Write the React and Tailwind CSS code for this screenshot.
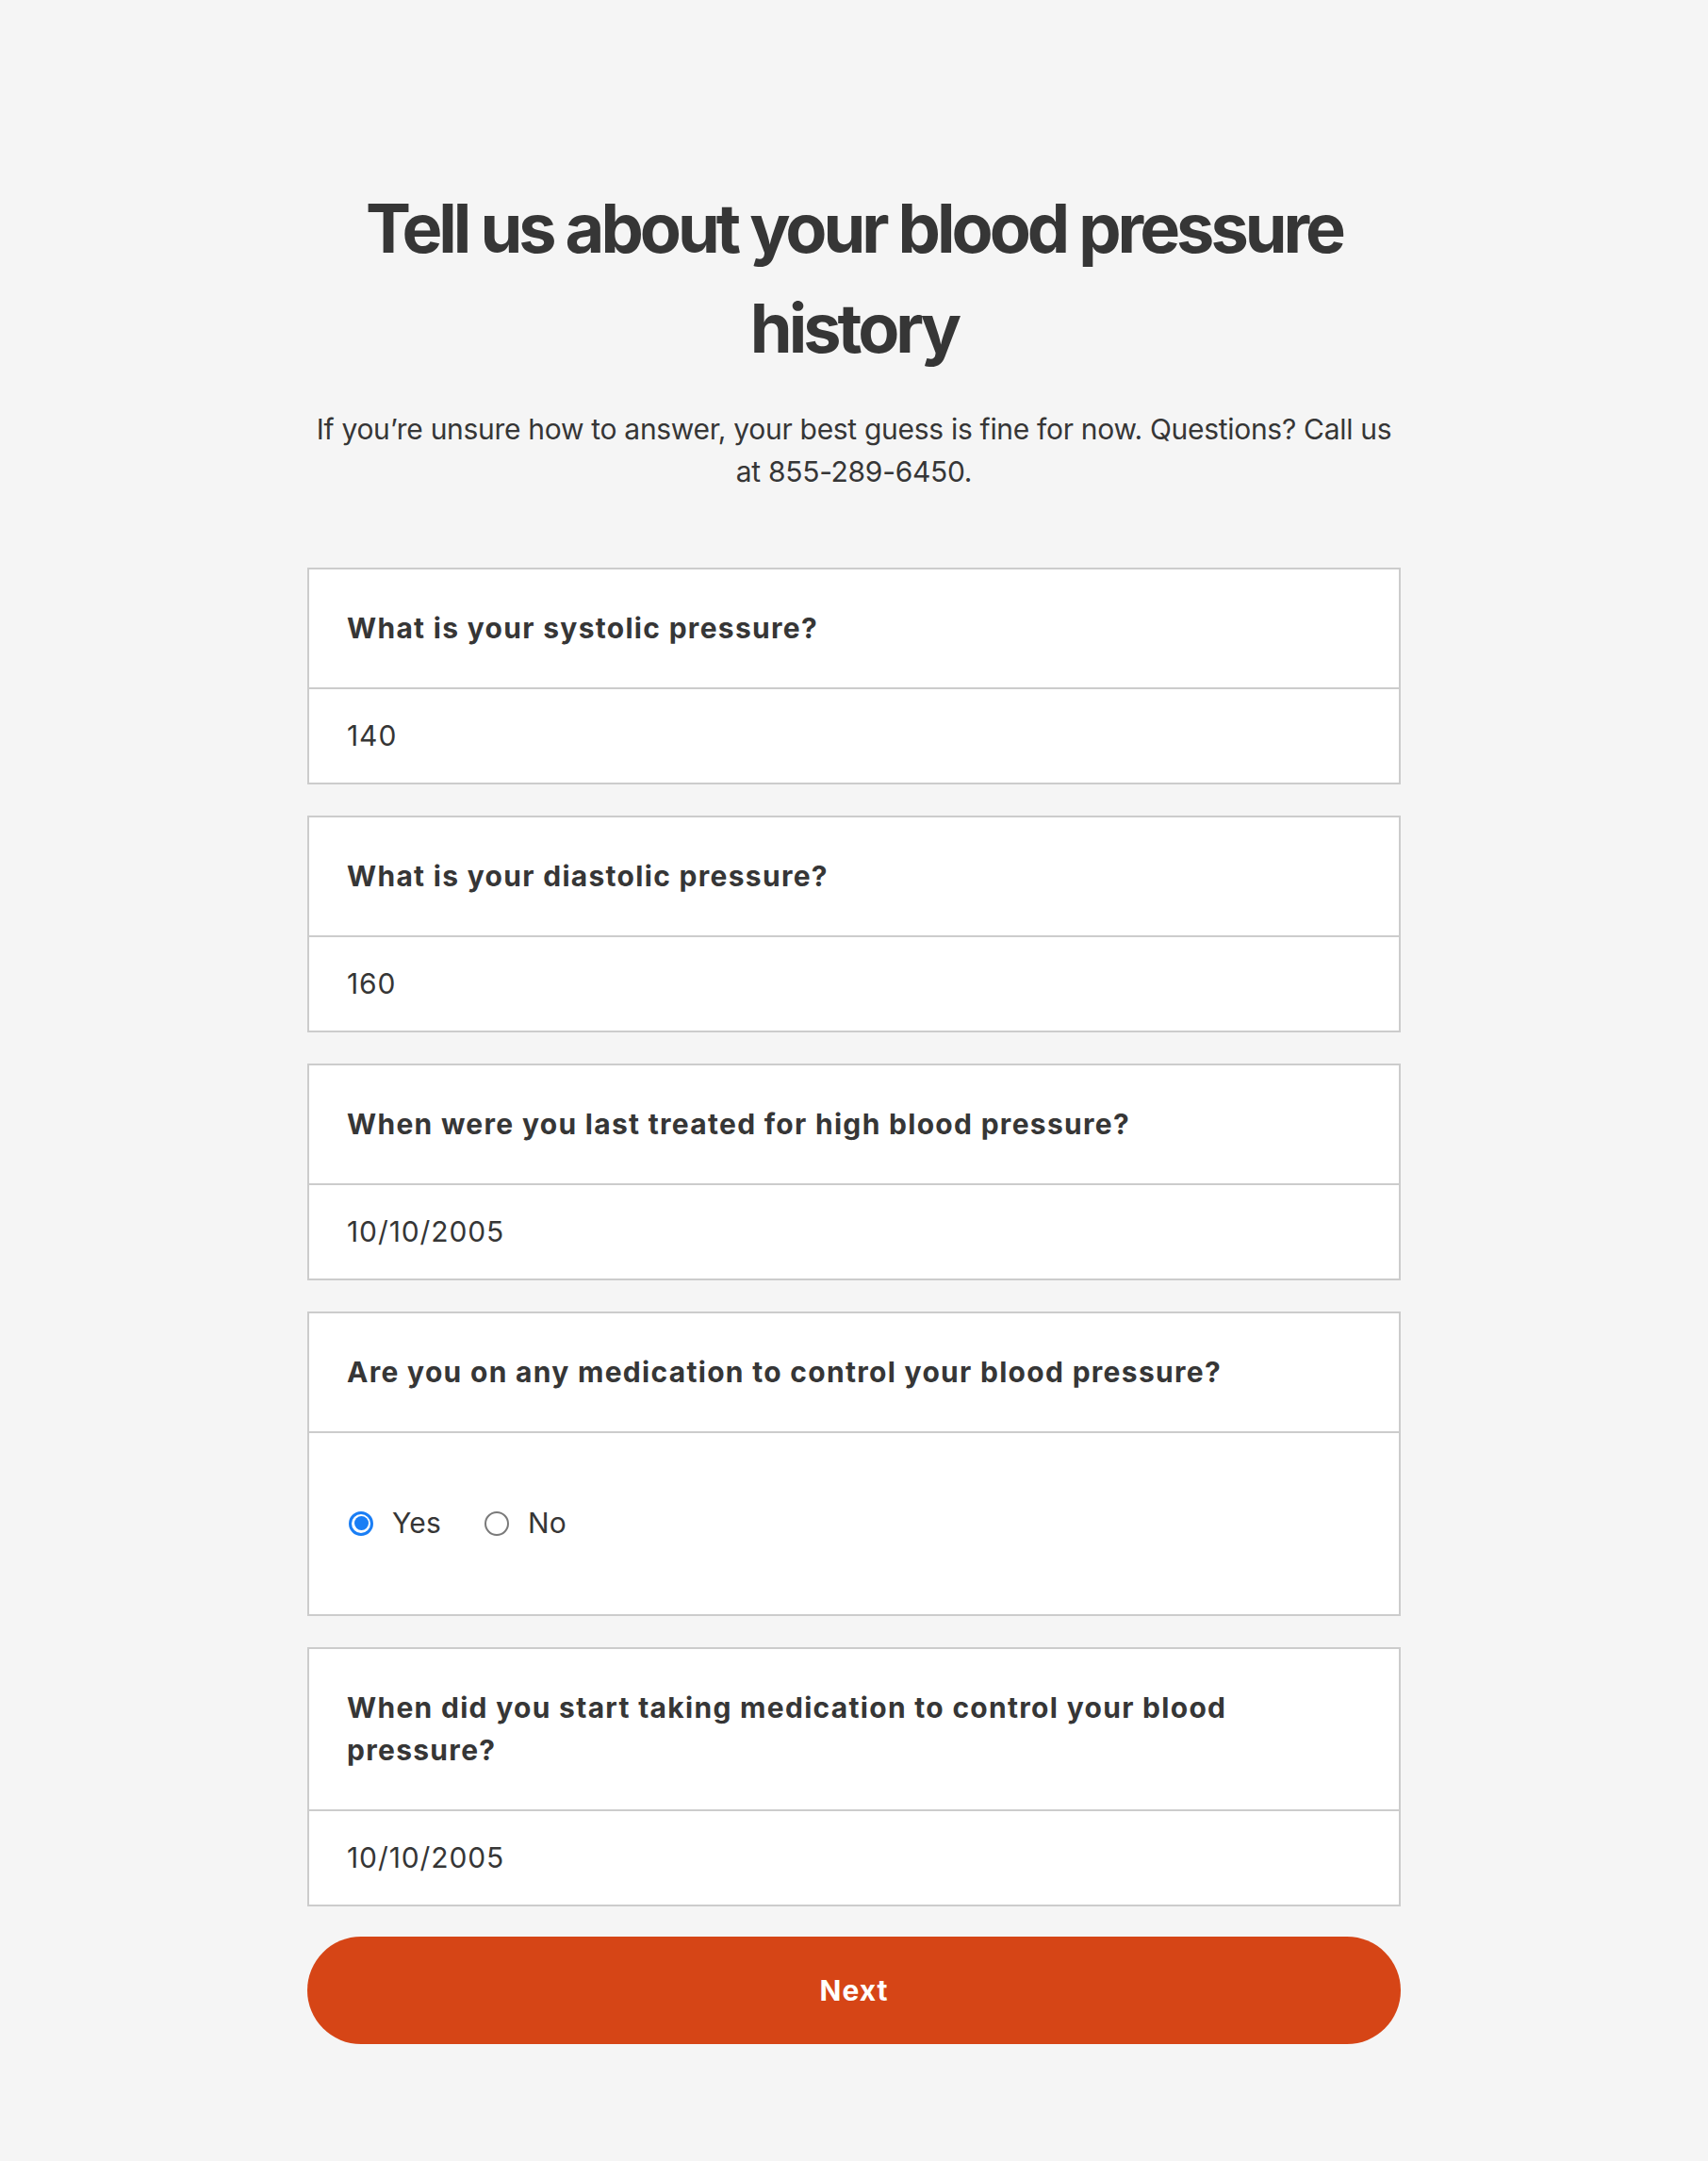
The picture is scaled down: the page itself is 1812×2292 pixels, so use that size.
import React from "react";

const font = { fontFamily: "Inter, 'Noto Sans', sans-serif" };

function Header({ children }) {
  return (
    <div className="border-b-2 border-[#cccccc] px-[40px] py-[40px] text-[30px] font-bold leading-[45px] tracking-[1.3px] text-[#363636]">
      {children}
    </div>
  );
}

function Value({ children }) {
  return (
    <div className="px-[40px] py-[27px] text-[30px] leading-[45px] tracking-[0.9px] text-[#363636]">
      {children}
    </div>
  );
}

function TextCard({ question, value }) {
  return (
    <div className="border-2 border-[#cccccc] bg-white">
      <Header>{question}</Header>
      <Value>{value}</Value>
    </div>
  );
}

function Radio({ checked, label }) {
  return (
    <label className="flex items-center gap-[20px]">
      {checked ? (
        <span className="flex h-[26px] w-[26px] items-center justify-center rounded-full border-[3px] border-[#1a7ef5] bg-white">
          <span className="h-[15px] w-[15px] rounded-full bg-[#1a7ef5]" />
        </span>
      ) : (
        <span className="h-[26px] w-[26px] rounded-full border-[2px] border-[#7a7a7a] bg-white" />
      )}
      <span className="text-[30px] leading-[45px] tracking-[0.2px] text-[#363636]">{label}</span>
    </label>
  );
}

export default function App() {
  return (
    <div className="min-h-screen bg-[#f5f5f5]" style={font}>
      <div className="mx-auto w-[1160px] pt-[189px] pb-[124px]">
        <h1 className="text-center text-[72px] font-bold leading-[106px] tracking-[-4px] text-[#363636]">
          Tell us about your blood pressure
          <br />
          history
        </h1>
        <p className="mt-[32px] text-center text-[30px] leading-[45px] tracking-[-0.3px] text-[#363636]">
          If you’re unsure how to answer, your best guess is fine for now. Questions? Call us
          <br />
          at 855-289-6450.
        </p>

        <div className="mt-[79px] flex flex-col gap-[33px]">
          <TextCard question="What is your systolic pressure?" value="140" />
          <TextCard question="What is your diastolic pressure?" value="160" />
          <TextCard question="When were you last treated for high blood pressure?" value="10/10/2005" />
          <div className="border-2 border-[#cccccc] bg-white">
            <Header>Are you on any medication to control your blood pressure?</Header>
            <div className="flex items-center gap-[46px] px-[42px] pt-[73px] pb-[74px]">
              <Radio checked label="Yes" />
              <Radio label="No" />
            </div>
          </div>
          <div className="border-2 border-[#cccccc] bg-white">
            <Header>
              When did you start taking medication to control your blood
              <br />
              pressure?
            </Header>
            <Value>10/10/2005</Value>
          </div>
        </div>
        <button className="mt-[32px] flex h-[114px] w-full items-center justify-center rounded-full bg-[#d64516] text-[30px] font-bold leading-[45px] tracking-[1px] text-white">
          Next
        </button>
      </div>
    </div>
  );
}
